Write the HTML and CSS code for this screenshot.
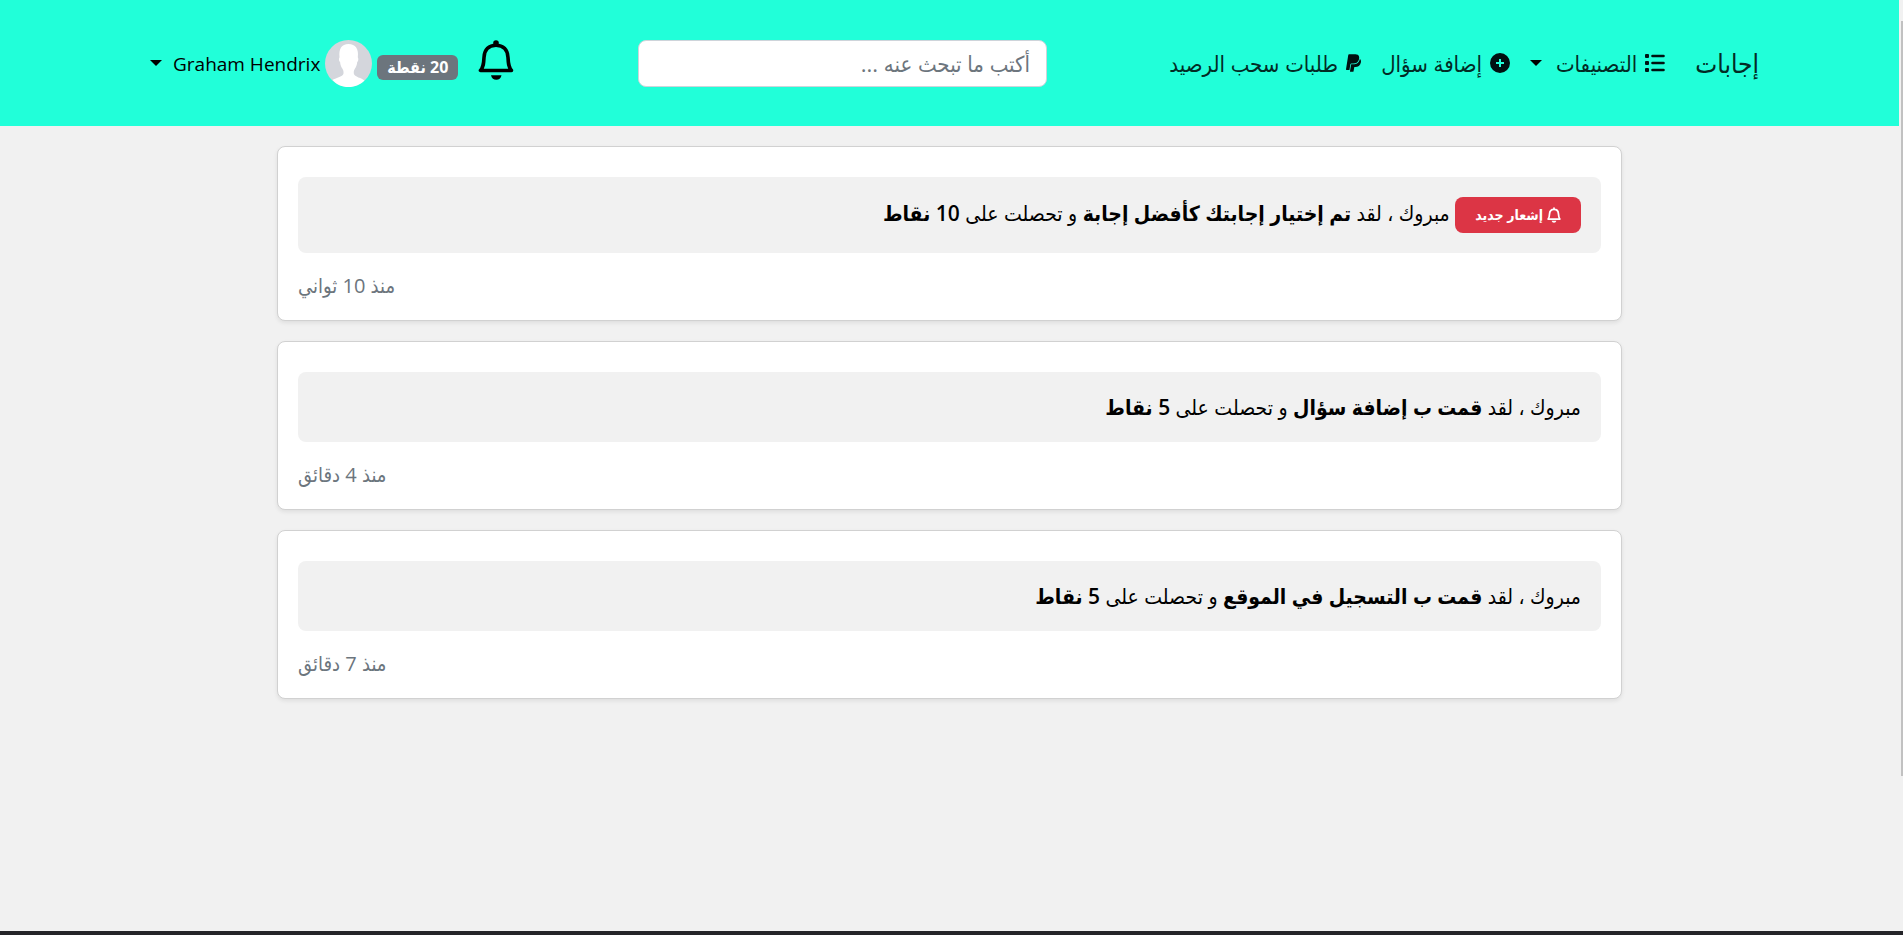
FILE: index.html
```html
<!DOCTYPE html>
<html lang="ar" dir="rtl">
<head>
<meta charset="utf-8">
<title>إجابات</title>
<link rel="stylesheet" href="styles.css">
</head>
<body>
<header class="topbar">
  <nav class="nav">
    <a class="brand" href="#">إجابات</a>
    <button class="nav-item" type="button">
      <svg class="icon" width="20" height="18" viewBox="0 0 20 18"><rect width="4" height="4" rx="1"/><rect y="7" width="4" height="4" rx="1"/><rect y="14" width="4" height="4" rx="1"/><path d="M7.500 2h11M7.500 9h11M7.500 16h11" stroke="currentColor" stroke-width="2.600" stroke-linecap="round"/></svg>
      <span>التصنيفات</span>
      <i class="caret"></i>
    </button>
    <a class="nav-item" href="#">
      <svg class="icon" width="20" height="20" viewBox="0 0 20 20"><path fill-rule="evenodd" d="M10 0a10 10 0 1 0 0 20a10 10 0 0 0 0-20zM9 6h2v3h3v2h-3v3H9v-3H6V9h3z"/></svg>
      <span>إضافة سؤال</span>
    </a>
    <a class="nav-item" href="#">
      <svg class="icon" width="15" height="18" viewBox="0 29 384 454"><path d="M111.4 295.9c-3.5 19.2-17.4 108.7-21.5 134-.3 1.8-1 2.500-3 2.500H12.3c-7.6 0-13.1-6.6-12.1-13.9L58.8 46.6c1.5-9.6 10.1-16.9 20-16.9 152.3 0 165.1-3.7 204 11.4 60.1 23.3 65.6 79.5 44 140.3-21.5 62.6-72.5 89.5-140.1 90.3-43.4.7-69.5-7-75.3 24.2zM357.1 152c-1.8-1.3-2.5-1.8-3 1.3-2 11.4-5.1 22.5-8.800 33.600-39.900 113.800-150.500 103.900-204.500 103.900-6.100 0-10.100 3.300-10.900 9.400-22.600 140.400-27.100 169.700-27.100 169.700-1 7.100 3.500 12.900 10.600 12.900h63.500c8.600 0 15.700-6.300 17.400-14.900.7-5.400-1.100 6.100 14.400-91.300 4.600-22 14.300-19.700 29.300-19.700 71 0 126.400-28.800 142.900-112.300 6.500-34.800 4.600-71.400-23.800-92.600z"/></svg>
      <span>طلبات سحب الرصيد</span>
    </a>
  </nav>
  <form class="search"><input class="search-box" type="search" placeholder="أكتب ما تبحث عنه ..." aria-label="بحث"></form>
  <div class="account">
    <a class="bell" href="#" aria-label="الإشعارات">
      <svg width="36" height="40" viewBox="0 0 36 40"><path d="M18 2.500V5M2.500 30.500h31c-3-3.500-3.200-7-3.500-13C29.700 9.500 25 5.200 18 5.200S6.300 9.500 6 17.500c-.3 6-.5 9.500-3.500 13z" fill="none" stroke="currentColor" stroke-width="3.600" stroke-linejoin="round"/><circle cx="18" cy="3" r="2.800"/><path d="M13 35.200h10.500c-.6 3-2.600 4.500-5.200 4.500s-4.700-1.500-5.300-4.500z"/></svg>
    </a>
    <button class="profile" type="button">
      <span class="points">20 نقطة</span>
      <svg class="avatar" width="47" height="47" viewBox="0 0 47 47"><circle cx="23.500" cy="23.500" r="23.500" fill="#d4d6dc"/><path d="M7.500 40C10 38 18 37 18.500 33.500c.2-2-.2-3.500-1.200-5-1.500-2.200-2-4-2.200-6.500-1.200-.6-1.500-3.500-.6-4.800C13.500 9 16.500 4 23.500 4s10.500 5 9.300 13.200c.9 1.300.6 4.200-.6 4.800-.2 2.500-.7 4.300-2.200 6.500-1 1.500-1.400 3-1.200 5C29.300 37 37 38 39.500 40.500 35.500 44.500 30 47 23.500 47s-12-2.500-16-7z" fill="#fff"/></svg>
      <span class="username" dir="ltr">Graham Hendrix</span>
      <i class="caret"></i>
    </button>
  </div>
</header>
<main class="feed">
  <article class="card">
    <p class="message"><a class="new-badge" href="#"><svg width="14" height="16" viewBox="0 0 36 40" fill="currentColor"><path d="M18 2v3M3 30.500h30c-3-3.500-3.200-7-3.500-13C29.200 9.500 25 5.500 18 5.500S6.800 9.500 6.500 17.500c-.3 6-.5 9.500-3.500 13z" fill="none" stroke="currentColor" stroke-width="4.500" stroke-linejoin="round" stroke-linecap="round"/><path d="M12 35h12c-.6 3-3 5-6 5s-5.400-2-6-5z"/></svg> إشعار جديد</a> مبروك ، لقد <b>تم إختيار إجابتك كأفضل إجابة</b> و تحصلت على <b>10 نقاط</b></p>
    <time class="time">منذ 10 ثواني</time>
  </article>
  <article class="card">
    <p class="message">مبروك ، لقد <b>قمت ب إضافة سؤال</b> و تحصلت على <b>5 نقاط</b></p>
    <time class="time">منذ 4 دقائق</time>
  </article>
  <article class="card">
    <p class="message">مبروك ، لقد <b>قمت ب التسجيل في الموقع</b> و تحصلت على <b>5 نقاط</b></p>
    <time class="time">منذ 7 دقائق</time>
  </article>
</main>
<footer class="footer"></footer>
<div class="scrollbar"><div class="thumb"></div></div>
</body>
</html>
```
FILE: styles.css
```css
* { box-sizing: border-box; }
body {
  margin: 0;
  padding-right: 4px;
  min-height: 100vh;
  display: flex;
  flex-direction: column;
  background: #f1f1f1;
  color: #000;
  font-family: "Open Sans", "DejaVu Sans Condensed", "DejaVu Sans", sans-serif;
  font-size: 21px;
}
a { color: inherit; text-decoration: none; }
b { font-weight: 600; }
button { border: 0; padding: 0; background: none; color: inherit; font: inherit; cursor: pointer; }
svg { fill: currentColor; flex: none; }
.topbar {
  display: flex;
  align-items: center;
  height: 126px;
  padding: 0 140px 0 150px;
  background: #21ffd9;
  white-space: nowrap;
}
.nav { display: flex; align-items: center; gap: 20px; flex: 1; color: #022b25; font-size: 22px; }
.brand { font-size: 26px; line-height: 36px; margin-left: 10px; }
.nav-item { display: flex; align-items: center; gap: 8px; line-height: 30px; }
.nav-item .caret { margin-right: 6px; }
.caret { border: 6px solid transparent; border-top-color: #000; border-bottom: 0; }
.icon { color: #001111; }
.search { width: 409px; }
.search-box {
  width: 100%;
  height: 47px;
  padding: 0 16px;
  border: 1px solid #ced4da;
  border-radius: 8px;
  background: #fff;
  font: inherit;
  font-size: 22px;
}
.search-box::placeholder { color: #6c757d; opacity: 1; }
.account { display: flex; align-items: center; justify-content: flex-end; gap: 20px; width: 488px; }
.bell { display: flex; margin-bottom: 6px; }
.profile { display: flex; align-items: center; gap: 5px; font-size: 19px; }
.points {
  padding: 0 10px;
  border-radius: 6px;
  background: #6c757d;
  color: #fff;
  font-size: 16px;
  font-weight: 700;
  line-height: 25px;
  margin-top: 8px;
}
.username { padding-top: 2px; }
.profile .caret { margin-right: 6px; }
.feed { width: 71%; max-width: 1345px; margin: 20px auto; flex: 1; display: flex; flex-direction: column; gap: 20px; }
.card {
  padding: 30px 20px 20px;
  border: 1px solid #d1d1d1;
  border-radius: 8px;
  background: #fff;
  box-shadow: 0 2px 4px rgba(0, 0, 0, .08);
}
.message { margin: 0 0 20px; padding: 20px; border-radius: 8px; background: #f1f1f1; line-height: 30px; }
.new-badge {
  display: inline-flex;
  align-items: center;
  gap: 4px;
  padding: 0 20px;
  border-radius: 8px;
  background: #dc3545;
  color: #fff;
  font-size: 14px;
  font-weight: 700;
  line-height: 36px;
  vertical-align: middle;
}
.time { display: block; text-align: left; color: #6c757d; font-size: 20px; line-height: 26px; padding-bottom: 1px; }
.footer { height: 4px; background: #242428; margin-right: -4px; }
.scrollbar { position: fixed; top: 0; right: 0; bottom: 4px; width: 4px; padding: 21px 0 0; background: #f1f1f1; }
.thumb { width: 2px; height: 83%; background: #c1c1c1; }
```
